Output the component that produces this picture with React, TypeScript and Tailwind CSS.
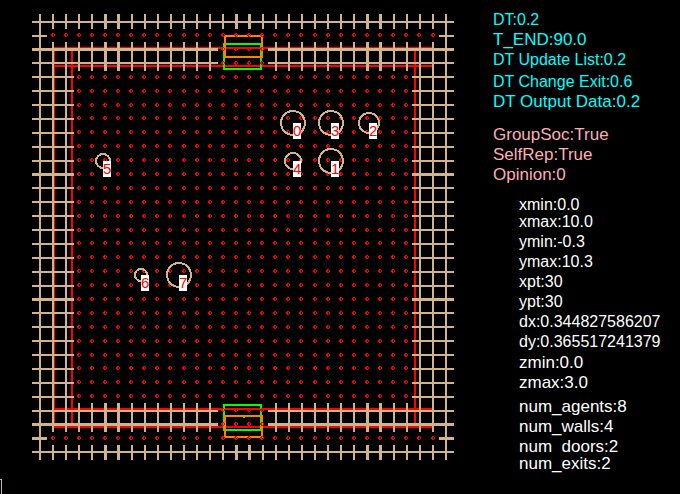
const WALL = "#d2b48c";

// Left edge of every grid column and top edge of every grid row.
const COLUMNS = [
  39, 52, 65, 78, 91, 104, 117, 131, 144, 157, 170, 183, 196, 209, 222, 235, 248, 262, 275, 288, 301,
  314, 327, 340, 353, 366, 379, 393, 406, 419, 432, 445,
];
const WIDE_COLUMNS = [5, 6, 15, 16, 25, 26];
const WIDE_ROWS = [2, 11, 20, 29, 30];
const LAST = 31;

const nodeX = (i: number) => Math.floor(39.9 + (380 / 29) * i) - 2;
const nodeY = (j: number) => Math.floor(21.7 + 13.8897 * j) - 2;
const rowY = (j: number) => Math.round(21.65 + 13.8897 * j) - 1;

const indexes = Array.from({ length: LAST + 1 }, (_, i) => i);

type Box = { x: number; y: number; w: number; h: number };

function gridBars(): Box[] {
  const bars: Box[] = [];
  indexes.forEach((i) => {
    const x = COLUMNS[i];
    const w = WIDE_COLUMNS.includes(i) ? 3 : 2;
    const add = (from: number, to: number) => bars.push({ x, y: from, w, h: to - from });
    if (i === 0 || i === LAST) {
      add(14, 460);
      return;
    }
    add(14, 29);
    add(445, 460);
    if (i <= 2 || i >= 29) {
      add(42, 432);
    } else if (i < 14 || i > 17) {
      add(42, 71);
      add(403, 432);
    }
  });
  indexes.forEach((j) => {
    const y = rowY(j);
    const h = WIDE_ROWS.includes(j) ? 3 : 2;
    const add = (from: number, to: number) => bars.push({ x: from, y, w: to - from, h });
    if (j === 0 || j === LAST) {
      add(32, 454);
    } else if (j === 1 || j === 30) {
      add(32, 47);
      add(439, 454);
    } else if (j <= 3 || j >= 28) {
      add(32, 218);
      add(268, 454);
    } else {
      add(32, 74);
      add(412, 454);
    }
  });
  return bars;
}

function isFree(i: number, j: number) {
  if (i === 0 || i === LAST || j === 0 || j === LAST) return false;
  if (j === 1 || j === 30) return true;
  if (j <= 3 || j >= 28) return i >= 14 && i <= 17;
  return i >= 3 && i <= 28;
}

const nodes = indexes.flatMap((j) =>
  indexes.filter((i) => isFree(i, j)).map((i) => ({ x: nodeX(i), y: nodeY(j) })),
);

const walls: Box[] = [
  { x: 54, y: 48, w: 379, h: 18 },
  { x: 54, y: 409, w: 379, h: 18 },
  { x: 54, y: 48, w: 18, h: 379 },
  { x: 415, y: 48, w: 18, h: 379 },
];
const doors: Box[] = [
  { x: 224, y: 44, w: 37, h: 25 },
  { x: 224, y: 405, w: 37, h: 25 },
];
const exits: Box[] = [
  { x: 225, y: 36, w: 37, h: 21 },
  { x: 225, y: 416, w: 37, h: 21 },
];

const agents = [
  { id: 0, x: 293, y: 123, r: 12 },
  { id: 1, x: 331, y: 161, r: 12 },
  { id: 2, x: 369, y: 123, r: 10 },
  { id: 3, x: 331, y: 123, r: 12 },
  { id: 4, x: 293, y: 161, r: 8 },
  { id: 5, x: 103, y: 161, r: 7 },
  { id: 6, x: 141, y: 275, r: 6 },
  { id: 7, x: 179, y: 275, r: 12 },
];

function Outline({ boxes, color }: { boxes: Box[]; color: string }) {
  return (
    <g fill="none" stroke={color} strokeWidth="2">
      {boxes.map((b, k) => (
        <rect key={k} x={b.x} y={b.y} width={b.w} height={b.h} />
      ))}
    </g>
  );
}

function FloorPlan() {
  return (
    <svg
      className="block shrink-0"
      width="480"
      height="494"
      viewBox="0 0 480 494"
      shapeRendering="crispEdges"
      role="img"
      aria-label="Evacuation floor plan"
    >
      <Outline boxes={walls} color="#ff0000" />
      <Outline boxes={doors} color="#00ff00" />
      <Outline boxes={exits} color="#ff8000" />
      <path d="M243 56h2v1h-2zM243 417h2v1h-2z" fill="#00ff00" />
      <g fill={WALL}>
        {gridBars().map((b, k) => (
          <rect key={k} x={b.x} y={b.y} width={b.w} height={b.h} />
        ))}
      </g>
      <g fill="#ff0000">
        {nodes.map((n, k) => (
          <path
            key={k}
            d={`M${n.x + 1} ${n.y}h2v1h1v2h-1v1h-2v-1h-1v-2h1zM${n.x + 2} ${n.y + 1}v2h1v-2z`}
            fillRule="evenodd"
          />
        ))}
      </g>
      {agents.map((a) => (
        <g key={a.id}>
          <circle cx={a.x} cy={a.y} r={a.r} fill="none" stroke={WALL} strokeWidth="2" />
          <rect x={a.x} y={a.y} width="8" height="16" fill="#ffffff" />
          <text
            x={a.x}
            y={a.y + 13}
            fill="#ff0000"
            className="font-['Liberation_Sans',Arial,sans-serif] text-[15px]"
          >
            {a.id}
          </text>
        </g>
      ))}
      <path d="M0 479h2v15h-1v-14h-1z" fill={WALL} />
    </svg>
  );
}

export default function App() {
  return (
    <main className="flex min-h-screen bg-black font-['Liberation_Sans',Arial,sans-serif] text-[16px] leading-5 whitespace-nowrap">
      <FloorPlan />
      <aside className="pt-2.5 pl-[13px]">
        <section className="text-[#00ffff]">
          <p>DT:0.2</p>
          <p className="text-[17px]">T_END:90.0</p>
          <p>DT Update List:0.2</p>
          <p className="mt-0.5">DT Change Exit:0.6</p>
          <p className="text-[17px]">DT Output Data:0.2</p>
        </section>
        <section className="mt-[13px] text-[17px] text-[#ffaeb9]">
          <p>GroupSoc:True</p>
          <p>SelfRep:True</p>
          <p>Opinion:0</p>
        </section>
        <section className="mt-2.5 pl-[26px] text-white">
          <p className="h-[17px]">xmin:0.0</p>
          <p>xmax:10.0</p>
          <p>ymin:-0.3</p>
          <p>ymax:10.3</p>
          <p>xpt:30</p>
          <p>ypt:30</p>
          <p>dx:0.344827586207</p>
          <p>dy:0.365517241379</p>
          <div className="mt-px text-[17px]">
            <p>zmin:0.0</p>
            <p>zmax:3.0</p>
          </div>
          <div className="mt-1 text-[17px]">
            <p>num_agents:8</p>
            <p>num_walls:4</p>
            <p className="h-[17px] overflow-hidden">num_doors:2</p>
            <p>num_exits:2</p>
          </div>
        </section>
      </aside>
    </main>
  );
}
